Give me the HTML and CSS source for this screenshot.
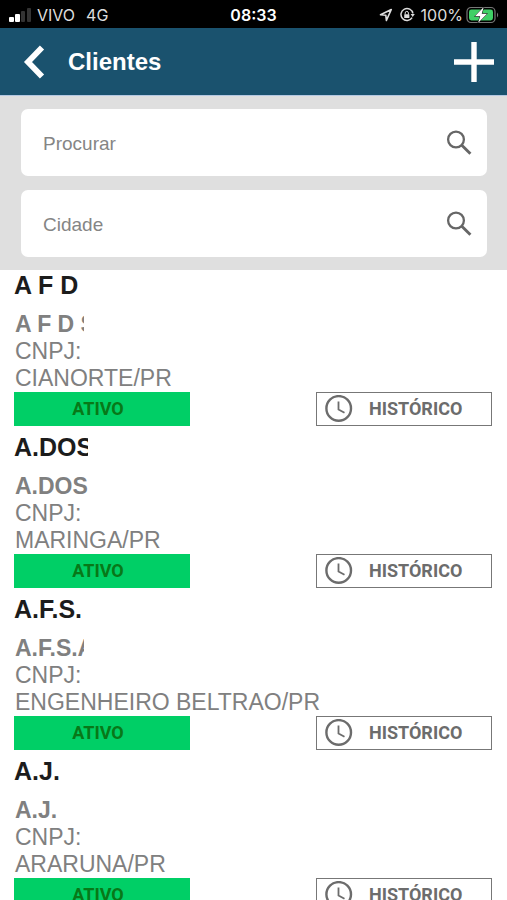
FILE: index.html
```html
<!DOCTYPE html>
<html lang="pt-BR">
<head>
<meta charset="utf-8">
<meta name="viewport" content="width=device-width, initial-scale=1">
<title>Clientes</title>
<link rel="stylesheet" href="styles.css">
</head>
<body>
<svg class="defs" aria-hidden="true">
  <symbol id="search" viewBox="0 0 26 26"><circle cx="10" cy="9.5" r="7.9" fill="none" stroke="currentColor" stroke-width="2.3"/><path d="M15.8 15.2 24.4 23.8" fill="none" stroke="currentColor" stroke-width="2.9"/></symbol>
  <symbol id="clock" viewBox="0 0 28 28"><circle cx="13.7" cy="13.4" r="12.3" fill="none" stroke="currentColor" stroke-width="2.4"/><path d="M13.5 6.5v8l6 3.3" fill="none" stroke="currentColor" stroke-width="1.8"/></symbol>
</svg>
<div class="status">
  <div class="status-left">
    <svg class="signal" viewBox="0 0 24 16" aria-hidden="true"><rect x="1" y="10" width="5" height="5" rx="1" fill="#fff"/><rect x="7" y="7" width="5" height="8" rx="1" fill="#fff"/><rect x="13" y="4" width="4" height="11" rx="1" fill="#333"/><rect x="19" y="1" width="4" height="14" rx="1" fill="#333"/></svg>
    <span>VIVO</span><span class="network">4G</span>
  </div>
  <time class="time">08:33</time>
  <div class="status-right">
    <svg class="location" viewBox="0 0 14 14" aria-hidden="true"><path d="M1.5 6.8 12.3 1.5 7.4 12.4 6.8 7.2Z" fill="none" stroke="#ddd" stroke-width="1.6" stroke-linejoin="round"/></svg>
    <svg class="rotation" viewBox="0 0 16 16" aria-hidden="true"><path d="M13.1 10.6A6 6 0 1 1 13.9 6.5" fill="none" stroke="#ddd" stroke-width="1.5"/><path d="M11.6 7h4.2l-2.1 3Z" fill="#ddd"/><rect x="5.2" y="7.2" width="5.2" height="3.8" rx=".6" fill="#ddd"/><path d="M6.2 7.5V6a1.6 1.6 0 0 1 3.2 0v1.5" fill="none" stroke="#ddd" stroke-width="1"/></svg>
    <span>100%</span>
    <svg class="battery" viewBox="0 0 34 18" aria-hidden="true"><rect x="1" y="1.5" width="28" height="15" rx="4" fill="none" stroke="#777" stroke-width="1.2"/><rect x="3" y="3.5" width="24" height="11" rx="2.4" fill="#3fcf66"/><path d="M31 6.5q2.4 2.5 0 5Z" fill="#777"/><path d="M17.8 1 8.8 10.3h5.4L12 17l9.2-9.3h-5.5Z" fill="#fff" stroke="#000" stroke-width="1" paint-order="stroke"/></svg>
  </div>
</div>
<header class="header">
  <button class="icon-button" aria-label="Voltar"><svg class="back" viewBox="0 0 22 34" aria-hidden="true"><path d="M19 2.5 5 17 19 31.5" fill="none" stroke="#fff" stroke-width="5.8"/></svg></button>
  <h1>Clientes</h1>
  <button class="icon-button" aria-label="Adicionar"><svg class="plus" viewBox="0 0 40 40" aria-hidden="true"><path d="M20 0v40M0 20h40" stroke="#fff" stroke-width="5.4"/></svg></button>
</header>
<form class="filters">
  <label class="field"><input type="text" placeholder="Procurar" aria-label="Procurar"><svg aria-hidden="true"><use href="#search"/></svg></label>
  <label class="field"><input type="text" placeholder="Cidade" aria-label="Cidade"><svg aria-hidden="true"><use href="#search"/></svg></label>
</form>
<main class="clients">
  <article class="client">
    <h2>A F D</h2>
    <p class="company">A F D S</p>
    <p>CNPJ:</p>
    <p>CIANORTE/PR</p>
    <div class="actions"><button class="active">ATIVO</button><button class="history"><svg aria-hidden="true"><use href="#clock"/></svg>HISTÓRICO</button></div>
  </article>
  <article class="client wide">
    <h2>A.DOS</h2>
    <p class="company">A.DOS</p>
    <p>CNPJ:</p>
    <p>MARINGA/PR</p>
    <div class="actions"><button class="active">ATIVO</button><button class="history"><svg aria-hidden="true"><use href="#clock"/></svg>HISTÓRICO</button></div>
  </article>
  <article class="client">
    <h2>A.F.S.</h2>
    <p class="company">A.F.S.A</p>
    <p>CNPJ:</p>
    <p>ENGENHEIRO BELTRAO/PR</p>
    <div class="actions"><button class="active">ATIVO</button><button class="history"><svg aria-hidden="true"><use href="#clock"/></svg>HISTÓRICO</button></div>
  </article>
  <article class="client">
    <h2>A.J.</h2>
    <p class="company">A.J.</p>
    <p>CNPJ:</p>
    <p>ARARUNA/PR</p>
    <div class="actions"><button class="active">ATIVO</button><button class="history"><svg aria-hidden="true"><use href="#clock"/></svg>HISTÓRICO</button></div>
  </article>
</main>
</body>
</html>
```
FILE: styles.css
```css
* { box-sizing: border-box; }
html { height: 100%; overflow: hidden; }
body {
  margin: 0;
  height: 100%;
  overflow: hidden;
  display: flex;
  flex-direction: column;
  background: #fff;
  color: #808080;
  font-family: "Liberation Sans", Arial, sans-serif;
}
button, input { font: inherit; color: inherit; margin: 0; padding: 0; border: 0; background: none; }
h1, h2, p { margin: 0; }
svg { display: block; flex: none; }
.defs { position: absolute; width: 0; height: 0; }

.status {
  flex: none;
  display: grid;
  grid-template-columns: 1fr auto 1fr;
  align-items: center;
  height: 28px;
  padding: 1px 8px 0;
  background: #000;
  color: #ddd;
  font-family: Inter, sans-serif;
  font-size: 16px;
  line-height: 24px;
}
.status-left, .status-right { display: flex; align-items: center; }
.status-right { justify-content: flex-end; gap: 6px; }
.signal { width: 24px; height: 16px; margin-right: 5px; }
.network { margin-left: 11px; }
.time { color: #fff; font-weight: 600; }
.location { width: 14px; height: 14px; }
.rotation { width: 16px; height: 16px; }
.battery { width: 34px; height: 18px; margin: 0 -1px 0 -3px; }

.header {
  flex: none;
  display: flex;
  align-items: center;
  height: 68px;
  padding: 0 13px 0 23px;
  background: #1a526e;
  border-bottom: 1px solid #b4c8e2;
  color: #fff;
}
.header h1 { flex: 1; margin-left: 23px; font-size: 24px; line-height: 32px; }
.icon-button { display: flex; }
.back { width: 22px; height: 34px; }
.plus { width: 40px; height: 40px; }

.filters {
  flex: none;
  display: flex;
  flex-direction: column;
  gap: 14px;
  padding: 13px 20px 13px 21px;
  background: #dfdfdf;
}
.field {
  display: flex;
  align-items: center;
  height: 67px;
  padding: 0 15px 0 22px;
  border-radius: 7px;
  background: #fff;
}
.field input { flex: 1; min-width: 0; height: 42px; padding-top: 2px; font-size: 19px; outline: 0; }
.field input::placeholder { color: #858585; opacity: 1; }
.field svg { width: 26px; height: 26px; color: #666; }

.clients { flex: 1; min-height: 0; overflow: hidden; }
.client { padding: 0 15px 6px 14px; font-size: 23px; line-height: 27px; }
.client h2, .company { width: 69px; overflow: hidden; white-space: nowrap; font-weight: 700; }
.client h2 { margin-bottom: 10px; color: #1c1c1c; font-size: 25px; line-height: 31px; }
.client p { padding-left: 1px; }
.company { width: 70px; }
.wide h2, .wide .company { width: 74px; }
.actions { display: flex; justify-content: space-between; }
.actions button {
  display: flex;
  align-items: center;
  width: 176px;
  height: 34px;
  font-family: Roboto, sans-serif;
  font-size: 18px;
  font-weight: 700;
  line-height: 24px;
}
.actions .active { justify-content: center; padding-right: 8px; background: #00cf66; color: #087818; }
.actions .history { gap: 16px; padding-left: 8px; border: 1px solid #777; color: #6c6c6c; }
.history svg { width: 28px; height: 28px; }
```
